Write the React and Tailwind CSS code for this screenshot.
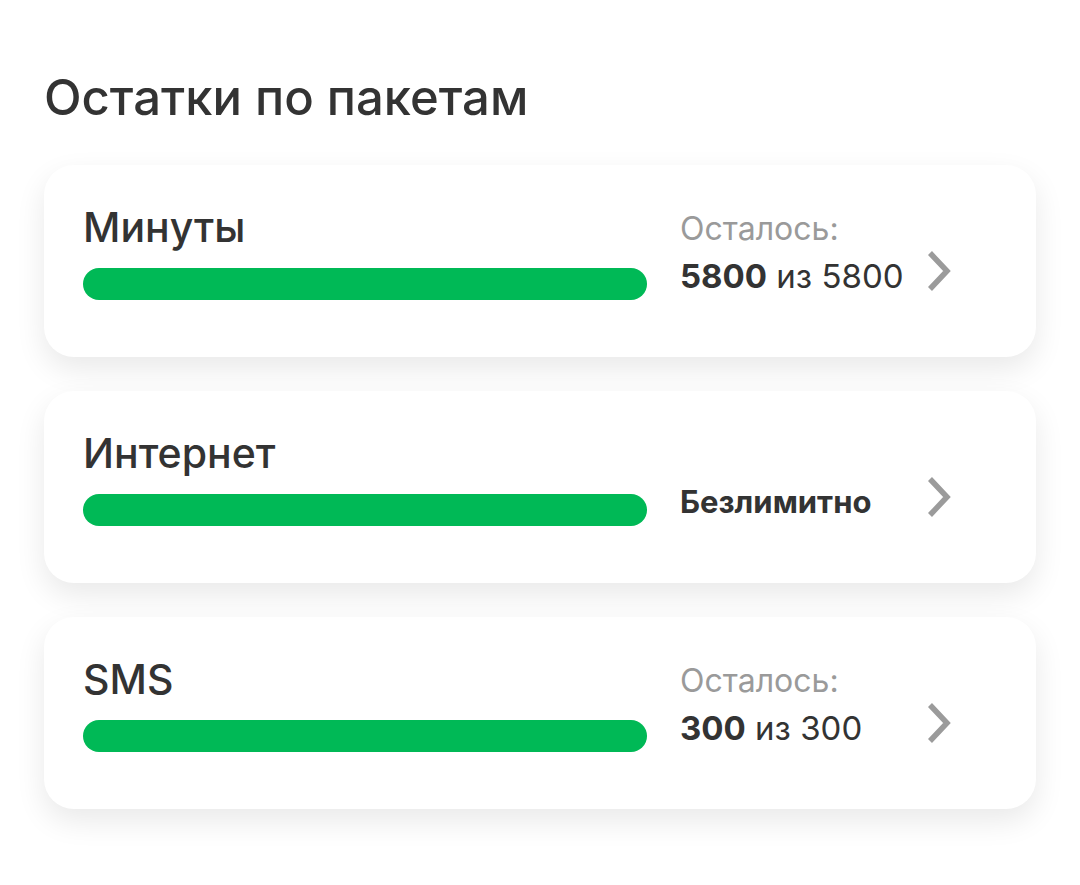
const packages = [
  { id: "min", title: "Минуты", kind: "left", left: "5800", total: "5800" },
  { id: "net", title: "Интернет", kind: "unlimited" },
  { id: "sms", title: "SMS", kind: "left", left: "300", total: "300" },
];

function Chevron() {
  return (
    <svg width="26" height="42" viewBox="0 0 26 42" fill="none">
      <polyline
        points="4,3 21,21 4,39"
        stroke="#9b9b9b"
        strokeWidth="5.5"
        strokeLinejoin="miter"
      />
    </svg>
  );
}

function PackageCard({ item }) {
  return (
    <div className="flex h-[192px] rounded-[30px] bg-white px-[39px] shadow-[0_12px_30px_rgba(0,0,0,0.09)]">
      <div className="w-[564px] shrink-0 pt-[37px]">
        <div className="text-[41px] leading-[50px] font-medium text-[#333333]">
          {item.title}
        </div>
        <div className="mt-[16px] h-[32px] w-full rounded-full bg-[#00b956]" />
      </div>

      <div className="ml-[33px] flex w-[214px] shrink-0 flex-col justify-end pb-[61px] whitespace-nowrap">
        {item.kind === "left" ? (
          <>
            <div className="text-[32px] leading-[38px] text-[#9a9a9a]">
              Осталось:
            </div>
            <div className="mt-[8px] text-[33px] leading-[40px] text-[#333333]">
              <span className="font-bold">{item.left}</span> из {item.total}
            </div>
          </>
        ) : (
          <div className="text-[31px] leading-[40px] font-bold text-[#333333]">
            Безлимитно
          </div>
        )}
      </div>

      <div className="ml-[32px] shrink-0 pt-[85px]">
        <Chevron />
      </div>
    </div>
  );
}

export default function App() {
  return (
    <div
      className="min-h-[885px] bg-white px-[44px] pt-[67px]"
      style={{ fontFamily: "Inter, 'Noto Sans', sans-serif" }}
    >
      <h1 className="text-[49px] leading-[62px] font-medium text-[#333333]">
        Остатки по пакетам
      </h1>

      <div className="mt-[36px] flex flex-col gap-[34px]">
        {packages.map((p) => (
          <PackageCard key={p.id} item={p} />
        ))}
      </div>
    </div>
  );
}
